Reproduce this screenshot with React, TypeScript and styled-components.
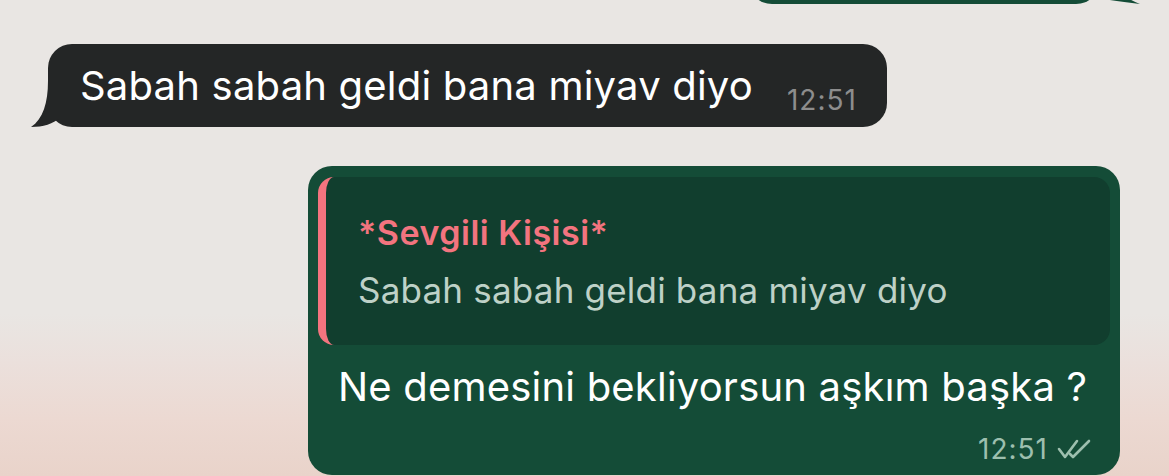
import * as React from 'react';
import styled, { createGlobalStyle } from 'styled-components';

const GlobalStyle = createGlobalStyle`
  html, body {
    margin: 0;
    padding: 0;
  }
  body {
    font-family: Inter, "Noto Sans", sans-serif;
    -webkit-font-smoothing: antialiased;
  }
`

const Chat = styled.div`
  width: 1169px;
  height: 476px;
  overflow: hidden;
  display: flex;
  flex-direction: column;
  background: linear-gradient(
    to bottom,
    #e9e6e3 0%,
    #e9e6e3 66%,
    #ebe0dc 76%,
    #ecd9d2 88%,
    #e9d3ca 100%
  );
`

const Row = styled.div<{ $out?: boolean; $gap?: number }>`
  display: flex;
  justify-content: ${p => (p.$out ? 'flex-end' : 'flex-start')};
  margin-top: ${p => p.$gap ?? 0}px;
  padding: 0 49px 0 48px;
`

const Bubble = styled.div<{ $out?: boolean }>`
  position: relative;
  background: ${p => (p.$out ? '#144c37' : '#242626')};
  border-radius: 24px;
  color: #fff;
`

const Tail = styled.svg<{ $out?: boolean }>`
  position: absolute;
  bottom: 0;
  ${p => (p.$out ? 'right: -40px;' : 'left: -17px;')}
`

const PrevBubble = styled(Bubble)`
  width: 352px;
  height: 60px;
  margin-top: -56px;
  margin-right: 20px;
`

const IncomingBubble = styled(Bubble)`
  display: flex;
  align-items: flex-end;
  padding: 18px 30px 17px 32px;
`

const Text = styled.span`
  font-size: 40px;
  line-height: 48px;
  letter-spacing: 0.2px;
`

const Time = styled.span<{ $color: string }>`
  font-size: 28px;
  line-height: 28px;
  color: ${p => p.$color};
  letter-spacing: 1px;
`

const IncomingTime = styled(Time)`
  margin-left: 34px;
  margin-bottom: -4px;
`

const OutgoingBubble = styled(Bubble)`
  width: 812px;
  padding: 11px 10px 12px 10px;
  box-sizing: border-box;
`

const Quote = styled.div`
  background: #113e2e;
  border-radius: 16px;
  border-left: 8px solid #f3747f;
  padding: 36px 20px 34px 32px;
  display: flex;
  flex-direction: column;
  gap: 16px;
`

const QuoteName = styled.div`
  color: #f3747f;
  font-weight: 600;
  font-size: 34px;
  line-height: 40px;
  letter-spacing: 0.5px;
`

const QuoteText = styled.div`
  color: #bed1c7;
  font-size: 35px;
  line-height: 42px;
  letter-spacing: 0.2px;
`

const Body = styled.div`
  padding: 18px 20px 0 20px;
`

const Meta = styled.div`
  display: flex;
  justify-content: flex-end;
  align-items: center;
  gap: 8px;
  padding: 24px 18px 0 0;
`

// read receipt: two slanted check marks
const Ticks: React.FC = () => (
  <svg width="36" height="22" viewBox="0 0 36 22" fill="none" stroke="#9dbfae" strokeWidth="2.6" strokeLinecap="round" strokeLinejoin="round">
    <path d="M3 11 L9 19 L21 3" />
    <path d="M14 16 L17 19 L33 3" />
  </svg>
)

export default function App() {
  return (
    <Chat>
      <GlobalStyle />
      <Row $out>
        <PrevBubble $out>
          <Tail $out width="44" height="12" viewBox="0 0 44 12">
            <path d="M0 0 L2 6 C12 8 28 10 44 12 C30 6 24 2 22 0 Z" fill="#144c37" />
          </Tail>
        </PrevBubble>
      </Row>

      <Row $gap={40}>
        <IncomingBubble>
          <Tail width="30" height="46" viewBox="0 0 30 46">
            <path d="M17 0 C17 22 12 38 0 46 C12 46 22 43 30 36 L30 0 Z" fill="#242626" />
          </Tail>
          <Text>Sabah sabah geldi bana miyav diyo</Text>
          <IncomingTime $color="#8d8d8d">12:51</IncomingTime>
        </IncomingBubble>
      </Row>

      <Row $out $gap={39}>
        <OutgoingBubble $out>
          <Quote>
            <QuoteName>*Sevgili Kişisi*</QuoteName>
            <QuoteText>Sabah sabah geldi bana miyav diyo</QuoteText>
          </Quote>
          <Body>
            <Text>Ne demesini bekliyorsun aşkım başka ?</Text>
          </Body>
          <Meta>
            <Time $color="#9dbfae">12:51</Time>
            <Ticks />
          </Meta>
        </OutgoingBubble>
      </Row>
    </Chat>
  );
}
